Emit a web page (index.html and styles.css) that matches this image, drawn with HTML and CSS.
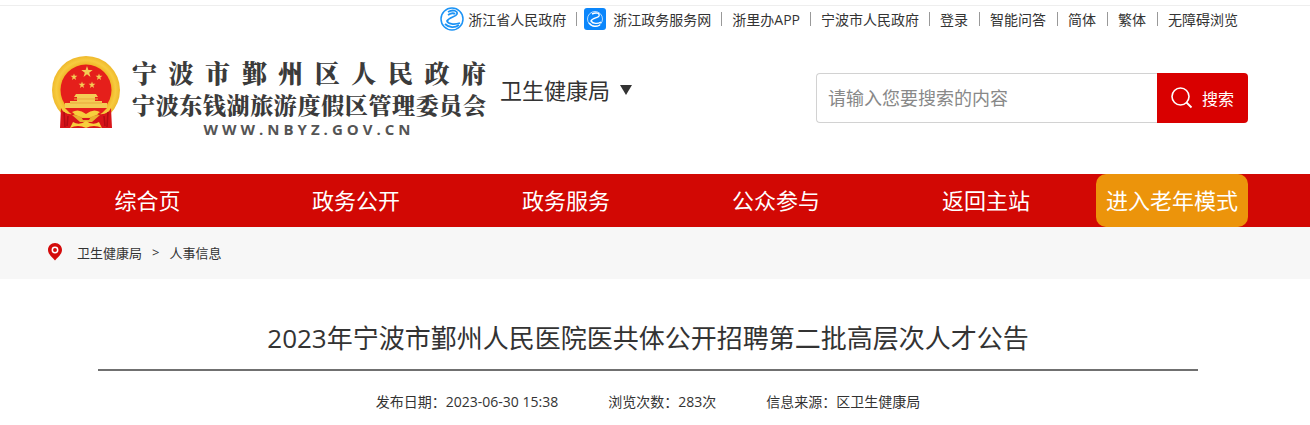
FILE: index.html
```html
<!DOCTYPE html>
<html lang="zh-CN">
<head>
<meta charset="utf-8">
<meta name="viewport" content="width=device-width, initial-scale=1">
<title>2023年宁波市鄞州人民医院医共体公开招聘第二批高层次人才公告</title>
<link rel="stylesheet" href="styles.css">
</head>
<body>
<div class="topbar">
  <ul class="wrap toplinks">
    <li><a class="with-icon" href="#"><svg class="icon-round" viewBox="0 0 24 24" aria-hidden="true"><circle cx="12" cy="12" r="11" fill="#fff" stroke="#1c93f5" stroke-width="1.5"/><path d="M8 5C13 2 18 4 17 7C16 10 9 10 7 14C8 17 14 18 20 16M8 8C11 6 14 6 15 7M5 17C9 21 15 21 19 18" fill="none" stroke="#1c93f5" stroke-width="1.8"/></svg>浙江省人民政府</a></li>
    <li class="service"><a class="with-icon" href="#"><svg class="icon-square" viewBox="0 0 22 22" aria-hidden="true"><rect width="22" height="22" rx="3" fill="#0b86fb"/><circle cx="11" cy="11" r="7.5" fill="none" stroke="#b9ddff" stroke-width="1"/><path d="M8 6C12 4 16 5 15 8C14 10 8 10 7 13C9 16 14 16 17 14M5 15C8 19 13 19 16 17" fill="none" stroke="#fff" stroke-width="1.4"/></svg>浙江政务服务网</a></li>
    <li><a href="#">浙里办APP</a></li>
    <li><a href="#">宁波市人民政府</a></li>
    <li><a href="#">登录</a></li>
    <li><a href="#">智能问答</a></li>
    <li><a href="#">简体</a></li>
    <li><a href="#">繁体</a></li>
    <li><a href="#">无障碍浏览</a></li>
  </ul>
</div>

<header class="header">
  <div class="wrap header-row">
    <a class="brand" href="#">
      <svg class="emblem" viewBox="0 0 70 76" aria-hidden="true">
        <defs>
          <radialGradient id="gold"><stop offset=".75" stop-color="#f1b82a"/><stop offset=".87" stop-color="#f7cb3f"/><stop offset="1" stop-color="#efb92c"/></radialGradient>
          <path id="star" d="M0-6L1.4-1.9H5.7L2.2.7 3.5 4.9 0 2.3-3.5 4.9-2.2.7-5.7-1.9H-1.4Z"/>
        </defs>
        <circle cx="34" cy="34" r="34" fill="url(#gold)"/>
        <circle cx="34" cy="34" r="25.500" fill="#e51f1b"/>
        <g fill="#f4cc55"><use href="#star" transform="translate(35 16)"/><use href="#star" transform="translate(22 21) scale(.6)"/><use href="#star" transform="translate(47 21) scale(.6)"/><use href="#star" transform="translate(30 29) scale(.6)"/><use href="#star" transform="translate(40 29) scale(.6)"/>
        <path d="M24 38H44L46 41H43V45H50V47H55V52H13V47H18V45H25V41H22Z"/></g>
        <path d="M22 43H46M18 47H50" stroke="#e9a93c" stroke-width="1"/>
        <path d="M13 52H55L50 57Q46 60 43 56Q34 50 25 56Q22 60 18 57Z" fill="#e51f1b"/>
        <path d="M20 56Q27 52 34 58Q41 52 48 56Q43 61 34 61Q25 61 20 56Z" fill="#f7cf3d"/>
        <path d="M9 52Q12 59 21 58L30 62H38L47 58Q56 59 59 52L60 72H8Z" fill="#d8151a"/>
        <path d="M20 59Q29 59 31 64H37Q39 59 48 59L40 66H28Z" fill="#e9b22f"/>
        <path d="M18 72L21 66Q27 70 34 65Q41 70 47 66L50 72Q42 68 34 72Q26 68 18 72Z" fill="#f7cf3d"/>
        <path d="M12 56L13 71M56 56L55 71M16 60L15 70M52 60L53 70" fill="none" stroke="#b30c14" stroke-width="1.500"/>
      </svg>
      <span class="brand-text">
        <span class="brand-main">宁波市鄞州区人民政府</span>
        <span class="brand-sub">宁波东钱湖旅游度假区管理委员会</span>
        <span class="brand-url">WWW.NBYZ.GOV.CN</span>
      </span>
    </a>
    <button class="dept" type="button">卫生健康局<svg class="caret" viewBox="0 0 12 10" aria-hidden="true"><path d="M0 0H12L6 10Z" fill="#333"/></svg></button>
    <form class="search" role="search">
      <input class="search-input" type="text" placeholder="请输入您要搜索的内容" aria-label="搜索内容">
      <button class="search-button" type="button"><svg class="glass" viewBox="0 0 22 22" aria-hidden="true"><circle cx="9.5" cy="9.5" r="8.5" fill="none" stroke="#fff" stroke-width="1.6"/><path d="M15.5 15.5L20.5 20.5" stroke="#fff" stroke-width="1.8"/></svg>搜索</button>
    </form>
  </div>
</header>

<nav class="nav">
  <div class="wrap nav-row">
    <a href="#">综合页</a>
    <a href="#">政务公开</a>
    <a href="#">政务服务</a>
    <a href="#">公众参与</a>
    <a href="#">返回主站</a>
    <a class="elder" href="#">进入老年模式</a>
  </div>
</nav>

<div class="crumbs">
  <div class="wrap crumbs-row">
    <svg class="pin" viewBox="0 0 14 18" aria-hidden="true"><path d="M7 0C11 0 14 3 14 7C14 11 10 14 7 17.500C4 14 0 11 0 7C0 3 3 0 7 0Z" fill="#d40b0b"/><circle cx="7" cy="7" r="2.700" fill="#d40b0b" stroke="#fff" stroke-width="1.500"/></svg>
    <a href="#">卫生健康局</a><span>&gt;</span><a href="#">人事信息</a>
  </div>
</div>

<main class="page">
  <article class="article">
    <h1 class="title">2023年宁波市鄞州人民医院医共体公开招聘第二批高层次人才公告</h1>
    <div class="meta">
      <span>发布日期：2023-06-30 15:38</span>
      <span>浏览次数：283次</span>
      <span>信息来源：区卫生健康局</span>
    </div>
  </article>
</main>
</body>
</html>
```

FILE: styles.css
```css
* { box-sizing: border-box; }

body {
  margin: 0;
  background: #fff;
  color: #333;
  font-family: "Open Sans", "Noto Sans CJK SC", sans-serif;
  font-size: 14px;
}

a { color: inherit; text-decoration: none; }
button, input { font-family: inherit; }

.topbar, .header, .nav, .crumbs, .page { padding-right: 14px; }
.wrap { width: 100%; max-width: 1200px; margin: 0 auto; }

.topbar { margin-top: 5px; border-top: 1px solid #eee; }
.toplinks {
  display: flex;
  justify-content: flex-end;
  align-items: center;
  height: 26px;
  padding: 0;
  list-style: none;
  white-space: nowrap;
}
.toplinks li {
  display: flex;
  align-items: center;
  height: 14px;
  padding: 0 10px;
  border-left: 1px solid #999;
}
.toplinks li:first-child { border-left: 0; }
.toplinks li:nth-child(n+5):not(:last-child) { padding-right: 11px; }
.toplinks .service { padding-left: 7px; }
.with-icon { display: flex; align-items: center; }
.icon-round { width: 24px; height: 24px; margin-right: 4px; }
.icon-square { width: 22px; height: 22px; margin-right: 7px; }

.header-row { display: flex; align-items: flex-start; padding: 24px 0 38px 4px; }
.brand { display: flex; align-items: flex-start; }
.emblem { width: 70px; height: 76px; margin-right: 10px; }
.brand-text {
  display: flex;
  flex-direction: column;
  width: 354px;
  color: #3b3b3b;
  font-family: "Noto Serif CJK SC", "Noto Sans CJK SC", serif;
  font-weight: 900;
  white-space: nowrap;
}
.brand-main, .brand-sub { text-align: justify; text-align-last: justify; text-justify: inter-character; }
.brand-main { font-size: 25px; line-height: 32px; }
.brand-sub { font-size: 23px; line-height: 34px; }
.brand-url {
  align-self: center;
  color: #555;
  font-family: "Open Sans", sans-serif;
  font-size: 15px;
  font-weight: 700;
  line-height: 14px;
  letter-spacing: 4px;
}
.dept {
  display: flex;
  align-items: center;
  margin: 18px 0 0 14px;
  padding: 0;
  border: 0;
  background: none;
  color: #333;
  font-size: 22px;
  line-height: 32px;
  white-space: nowrap;
}
.caret { width: 12px; height: 10px; margin-left: 10px; }
.search { display: flex; width: 432px; height: 50px; margin: 17px 0 0 auto; }
.search-input {
  flex: 1;
  min-width: 0;
  padding: 0 11px;
  border: 1px solid #d2d2d2;
  border-right: 0;
  border-radius: 4px 0 0 4px;
  color: #333;
  font-size: 18px;
}
.search-input::placeholder { color: #888; }
.search-button {
  display: flex;
  align-items: center;
  justify-content: center;
  gap: 9px;
  width: 91px;
  padding: 0;
  border: 0;
  border-radius: 0 4px 4px 0;
  background: #d90000;
  color: #fff;
  font-size: 16px;
}
.glass { width: 22px; height: 22px; }

.nav { background: #d20804; color: #fff; }
.nav-row {
  display: grid;
  grid-template-columns: 199fr repeat(4, 202fr) 153fr;
  column-gap: 8px;
  font-size: 22px;
  line-height: 53px;
  text-align: center;
  white-space: nowrap;
}
.nav .elder {
  justify-self: end;
  padding: 0 10px;
  border-radius: 10px;
  background: #ec940b;
}

.crumbs { background: #f7f7f7; }
.crumbs-row { display: flex; align-items: center; gap: 10px; height: 52px; padding-bottom: 2px; font-size: 13px; }
.pin { width: 14px; height: 18px; margin-right: 5px; }

.article { max-width: 1100px; margin: 0 auto; padding-top: 40px; }
.title {
  margin: 0;
  padding-bottom: 12px;
  border-bottom: 2px solid #707070;
  font-size: 26px;
  font-weight: 400;
  line-height: 38px;
  text-align: center;
}
.meta { display: flex; justify-content: center; gap: 50px; padding-top: 20px; line-height: 22px; }
```
